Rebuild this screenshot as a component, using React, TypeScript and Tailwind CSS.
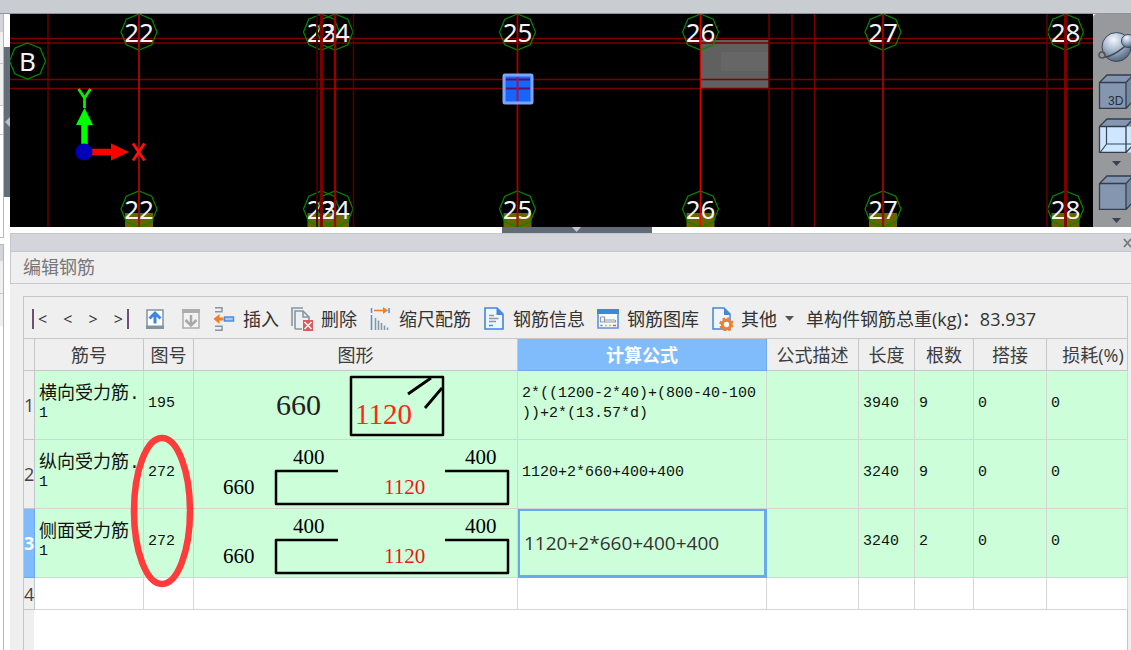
import React from 'react';

const UI_FONT = "font-['Open_Sans','Noto_Sans_CJK_SC',sans-serif]";
const MONO_FONT = "font-['Liberation_Mono','Noto_Sans_CJK_SC',monospace]";

type Line = { at: number; color: string; width: number };

const verticals: Line[] = [
  { at: 48, color: '#6c0000', width: 1.4 },
  { at: 139, color: '#a80808', width: 2 },
  { at: 317, color: '#480000', width: 2 },
  { at: 321.5, color: '#860000', width: 3 },
  { at: 335, color: '#a80000', width: 2.4 },
  { at: 353.5, color: '#5c0000', width: 1.6 },
  { at: 517.5, color: '#b80000', width: 1.8 },
  { at: 700.5, color: '#f40000', width: 1.6 },
  { at: 769, color: '#6c0000', width: 1.8 },
  { at: 792, color: '#780000', width: 1.4 },
  { at: 814.5, color: '#7c0000', width: 1.4 },
  { at: 883, color: '#980808', width: 2.2 },
  { at: 1047, color: '#540000', width: 2 },
  { at: 1065.5, color: '#880000', width: 3 },
];

const horizontals = [38.5, 43, 79.5, 88.5];

const axes = [
  { x: 139, label: '22' },
  { x: 321.5, label: '23' },
  { x: 335, label: '24' },
  { x: 517.5, label: '25' },
  { x: 700.5, label: '26' },
  { x: 883, label: '27' },
  { x: 1065.5, label: '28' },
];

function octagon(cx: number, cy: number) {
  return Array.from({ length: 8 }, (_, i) => {
    const a = (i * Math.PI) / 4;
    return `${cx + 18 * Math.sin(a)},${cy - 18 * Math.cos(a)}`;
  }).join(' ');
}

function AxisBubble({ x, y, label }: { x: number; y: number; label: string }) {
  return (
    <g>
      <text x={x} y={y + 10} textAnchor="middle" fill="#f2f2f2" className="font-['Noto_Sans',sans-serif] text-[26px]">
        {label}
      </text>
      <polygon points={octagon(x, y)} fill="none" stroke="#008a00" strokeWidth="1.2" />
    </g>
  );
}

function Drawing() {
  return (
    <svg viewBox="10 14 1083 213" preserveAspectRatio="xMinYMin slice" className="block h-[213px] min-w-0 flex-1 bg-black" role="img" aria-label="轴网">
      <rect x="701" y="40" width="68" height="48" fill="#606060" />
      <path d="M721 52h47v19h-47z" fill="#666" />
      {axes.map((a) => (
        <rect key={a.label} x={a.x - 14} y="213" width="28" height="14" fill="#686400" />
      ))}
      {horizontals.map((y) => (
        <line key={y} x1="10" x2="1093" y1={y} y2={y} stroke="#7c0000" strokeWidth="1.5" />
      ))}
      {axes.map((a) => (
        <React.Fragment key={a.label}>
          <AxisBubble x={a.x} y={32} label={a.label} />
          <AxisBubble x={a.x} y={209} label={a.label} />
        </React.Fragment>
      ))}
      <AxisBubble x={27.5} y={61} label="B" />
      {verticals.map((l) => (
        <line
          key={l.at}
          x1={l.at}
          x2={l.at}
          y1="14"
          y2={227}
          stroke={l.color}
          strokeWidth={l.width}
          strokeOpacity={l.width >= 1.6 ? 0.9 : 1}
        />
      ))}
      <rect x="504" y="75" width="28" height="28" rx="1" fill="#1466ff" stroke="#7ca6fb" strokeWidth="3" />
      <path d="M506 79.5h24M506 88.5h24" stroke="#5c1060" strokeWidth="2" />
      <path d="M517.500 77v24" stroke="#a01450" strokeWidth="2" />
      <path d="M84.500 146V124" stroke="#00ff00" strokeWidth="6.500" />
      <path d="M84.500 108l8.500 17h-17z" fill="#00ff00" />
      <path d="M78.500 89l6 9 6-9M84.500 98v10" fill="none" stroke="#00f000" strokeWidth="2.800" />
      <path d="M90 152h22" stroke="#ff0000" strokeWidth="6.500" />
      <path d="M129 152l-18-8.500v17z" fill="#ff0000" />
      <path d="M133 143.500l11.500 17M144.500 143.500l-11.500 17" stroke="#ff1010" strokeWidth="2.800" />
      <circle cx="84" cy="152" r="8.500" fill="#0000b8" />
    </svg>
  );
}

function Cube({ kind }: { kind: 'labelled' | 'open' | 'solid' }) {
  const open = kind === 'open';
  return (
    <svg width="36" height="36" viewBox="0 0 36 36" className="block shrink-0">
      <path d="M1.500 9.500L9 2h26l-7 7.500v26H1.500z" fill="#8496b0" />
      <path d="M28 9.500L35 2v26l-7 7.500z" fill="#7488a2" />
      {open && <path d="M1.500 9.500H34v26H1.500z" fill="#cfe6ff" />}
      {open && <path d="M8.500 10v17H34M8.500 27l-6 8" fill="none" stroke="#3a4658" strokeWidth="1.200" />}
      <path d="M1.500 9.500L9 2h26l-7 7.500v26H1.500zM1.500 9.500H28M35 2v26l-7 7.500" fill="none" stroke="#333d4c" strokeWidth="1.300" />
      {kind === 'labelled' && (
        <text x="10" y="32" fill="#26303c" className="font-['Liberation_Sans',sans-serif] text-[12px]">
          3D
        </text>
      )}
    </svg>
  );
}

function Caret({ className = '' }: { className?: string }) {
  return (
    <svg width="9" height="5" viewBox="0 0 9 5" className={`block shrink-0 ${className}`}>
      <path d="M0 0h9L4.500 5z" fill="currentColor" />
    </svg>
  );
}

function ViewTools() {
  return (
    <aside className="flex h-[213px] w-[38px] shrink-0 flex-col items-start overflow-hidden rounded-tl bg-[#98999d] pl-[5px] pt-[15px] text-[#384252]">
      <button aria-label="动态观察" className="mb-2">
        <svg width="36" height="36" viewBox="0 0 36 36" className="block">
          <defs>
            <radialGradient id="ball" cx="0.4" cy="0.25" r="0.75">
              <stop offset="0" stopColor="#f4f8ff" />
              <stop offset="0.5" stopColor="#a8b8cc" />
              <stop offset="1" stopColor="#53647c" />
            </radialGradient>
          </defs>
          <circle cx="18.500" cy="18" r="14.500" fill="url(#ball)" stroke="#3c4858" strokeWidth="1" />
          <path d="M6 28C14 28 26 19 30 14" fill="none" stroke="#3c4858" strokeWidth="1.500" />
          <circle cx="4" cy="26" r="3" fill="none" stroke="#50565e" strokeWidth="1.500" />
          <circle cx="30" cy="12" r="6.500" fill="url(#ball)" stroke="#3c4858" />
        </svg>
      </button>
      <button aria-label="三维" className="mb-2"><Cube kind="labelled" /></button>
      <button aria-label="线框" className="mb-2 flex flex-col items-center gap-2"><Cube kind="open" /><Caret /></button>
      <button aria-label="实体" className="flex flex-col items-center gap-2"><Cube kind="solid" /><Caret /></button>
    </aside>
  );
}

function MoveIcon({ down = false }: { down?: boolean }) {
  return down ? (
    <svg width="20" height="22" viewBox="0 0 20 22">
      <path d="M2 2h16v18H2z" fill="#f2f2f2" stroke="#adadad" strokeWidth="1.500" />
      <path d="M1 1h18v4H1z" fill="#adadad" />
      <path d="M10 7v10M4.500 12l5.500 5.500L15.500 12" fill="none" stroke="#a8a8a8" strokeWidth="2.500" />
    </svg>
  ) : (
    <svg width="20" height="22" viewBox="0 0 20 22">
      <path d="M2 2h16v18H2z" fill="#fff" stroke="#8393a0" strokeWidth="1.500" />
      <path d="M1 17.500h18V21H1z" fill="#8393a0" />
      <path d="M10 15.500V6M4.500 10.500L10 5l5.500 5.500" fill="none" stroke="#3f86dc" strokeWidth="3" />
    </svg>
  );
}

const toolIcons = {
  insert: (
    <>
      <path d="M2 .8h7v4H2M2 23.200h7v-4H2" fill="none" stroke="#8496a2" strokeWidth="1.500" />
      <path d="M2.500 12h8" stroke="#f57e20" strokeWidth="3" />
      <path d="M.5 12l6-5v10z" fill="#f57e20" />
      <path d="M11.500 10h9v4h-9z" fill="#a8c8f0" stroke="#4c8fe0" strokeWidth="1.500" />
    </>
  ),
  remove: (
    <>
      <path d="M1 19V1h11M4 22V4h8l6 6v4M4 22h7" fill="none" stroke="#8496a2" strokeWidth="1.600" />
      <path d="M12 4v6h6" fill="none" stroke="#8496a2" strokeWidth="1.500" />
      <path d="M12 13h10v11H12z" fill="#d95b60" />
      <path d="M13.500 15l7 7M20.500 15l-7 7" stroke="#fff" strokeWidth="1.400" />
    </>
  ),
  scale: (
    <>
      <path d="M2.500 1v5M20 1v5M2.500 8v15" stroke="#4c8fe0" strokeWidth="1.500" />
      <path d="M5 3.500h11" stroke="#f57e20" strokeWidth="1.600" />
      <path d="M14 0l5 3.500L14 7z" fill="#f57e20" />
      <path d="M6.500 11v12M9.500 13.500V23M12.500 16v7M15.500 18.500V23M18.500 20.500V23" stroke="#8496a2" strokeWidth="1.500" />
    </>
  ),
  info: (
    <>
      <path d="M2 1h12l6 6v15H2z" fill="#eef5fd" stroke="#4385d8" strokeWidth="1.600" />
      <path d="M13.500 1v7H20z" fill="#4385d8" />
      <path d="M6 8.500h5M6 11.500h9.500M6 14.500h7" stroke="#8b98a4" strokeWidth="1.400" />
      <path d="M6 18.500h4" stroke="#4385d8" strokeWidth="1.400" />
    </>
  ),
  gallery: (
    <>
      <path d="M1 3h20v18H1z" fill="#f8f9fa" stroke="#5b93da" strokeWidth="1.600" />
      <path d="M0 2h22v5H0z" fill="#4385d8" />
      <path d="M3.500 10h4v5M3.500 10v5h15v-2M7 13h11" fill="none" stroke="#919ba4" strokeWidth="1.200" />
      <path d="M3.500 18.500h2" stroke="#4385d8" strokeWidth="1.500" />
      <path d="M8 18.500h2M12 18.500h2" stroke="#efb348" strokeWidth="1.500" />
      <path d="M16 18.500h3" stroke="#e05555" strokeWidth="1.500" />
    </>
  ),
  other: (
    <>
      <path d="M2 1h11l6 6v15H2z" fill="#eef5fd" stroke="#4385d8" strokeWidth="1.500" />
      <path d="M13 1v7h6z" fill="#4385d8" />
      <circle cx="15.500" cy="17.500" r="4.200" fill="#fff" stroke="#f08030" strokeWidth="3" />
      <circle cx="15.500" cy="17.500" r="6" fill="none" stroke="#f08030" strokeWidth="2.500" strokeDasharray="2.700 2.010" />
    </>
  ),
};

function Tool({ icon, label, menu = false }: { icon: keyof typeof toolIcons; label: string; menu?: boolean }) {
  return (
    <button className="flex shrink-0 items-center gap-2">
      <svg width="22" height="24" viewBox="0 0 22 24" className="block">
        {toolIcons[icon]}
      </svg>
      <span>{label}</span>
      {menu && <Caret className="text-[#555]" />}
    </button>
  );
}

const digits = "font-['Liberation_Serif',serif]";

function StirrupShape() {
  return (
    <svg width="322" height="68" viewBox="194 371 322 68" className="block">
      <path d="M351 377h92v58h-92z" fill="none" stroke="#000" strokeWidth="2.500" strokeLinejoin="round" />
      <path d="M431 378l-23 16M442 388l-17 20" stroke="#000" strokeWidth="2.800" />
      <text x="276" y="415" fill="#222" className={`${digits} text-[30px]`}>660</text>
      <text x="355" y="424" fill="#ff2814" className={`${digits} text-[29px]`}>1120</text>
    </svg>
  );
}

function HookShape() {
  return (
    <svg width="322" height="68" viewBox="194 440 322 68" className="block">
      <path d="M338 471h-62v33h232v-33h-63" fill="none" stroke="#000" strokeWidth="2.500" strokeLinejoin="round" />
      <g className={`${digits} text-[21px]`}>
        <text x="293" y="464">400</text>
        <text x="465" y="464">400</text>
        <text x="223" y="494">660</text>
        <text x="384" y="494" fill="#f01414">1120</text>
      </g>
    </svg>
  );
}

const headers = ['筋号', '图号', '图形', '计算公式', '公式描述', '长度', '根数', '搭接', '损耗(%)'];

const rows = [
  { name: '横向受力筋.', code: '195', formula: '2*((1200-2*40)+(800-40-100))+2*(13.57*d)', length: '3940', count: '9' },
  { name: '纵向受力筋.', code: '272', formula: '1120+2*660+400+400', length: '3240', count: '9' },
  { name: '侧面受力筋.', code: '272', formula: '1120+2*660+400+400', length: '3240', count: '2', selected: true },
];

function RebarTable() {
  const cell = 'border-b border-r border-[#d4d6d4] px-1 pb-0.5 text-left';
  const head = 'overflow-hidden whitespace-nowrap border-b border-r border-[#c4c6c8] p-0 text-center font-normal';
  return (
    <table className="w-full table-fixed border-separate border-spacing-0 text-[#111]">
      <colgroup>
        <col className="w-[11px]" />
        <col className="w-[109px]" />
        <col className="w-[50px]" />
        <col />
        <col className="w-[249px]" />
        <col className="w-[92px]" />
        <col className="w-[56px]" />
        <col className="w-[59px]" />
        <col className="w-[73px]" />
        <col className="w-[81px]" />
      </colgroup>
      <thead>
        <tr className="h-8 bg-[#efefef] text-lg leading-6 text-[#3c3c3c]">
          <th className={head} aria-label="行" />
          {headers.map((h) => (
            <th
              key={h}
              className={
                h === '计算公式'
                  ? 'border-b border-r border-[#6ea8ee] bg-[#80bbfb] p-0 text-center font-bold text-white'
                  : h === '损耗(%)'
                    ? `${head} pl-3`
                    : head
              }
            >
              {h}
            </th>
          ))}
        </tr>
      </thead>
      <tbody className={`${MONO_FONT} text-[15px] leading-5`}>
        {rows.map((r, i) => (
          <tr key={r.name} className="h-[69px] bg-[#ccffd9]">
            <th
              className={
                r.selected
                  ? `${UI_FONT} border-b border-r border-[#6ea8ee] bg-[#80bbfb] p-0 text-lg font-bold text-white`
                  : `${UI_FONT} border-b border-r border-[#c4c6c8] bg-[#efefef] p-0 text-lg font-normal text-[#444]`
              }
            >
              {i + 1}
            </th>
            <td className={cell}>
              <span className="block whitespace-nowrap text-lg leading-5">{r.name}</span>
              <span className="block">1</span>
            </td>
            <td className={cell}>{r.code}</td>
            <td className="overflow-hidden border-b border-r border-[#d4d6d4] p-0">
              {i === 0 ? <StirrupShape /> : <HookShape />}
            </td>
            {r.selected ? (
              <td className="border-b border-r border-[#68a8ec] p-0">
                <input
                  aria-label="计算公式"
                  defaultValue={r.formula}
                  className={`${UI_FONT} block h-[68px] w-full border-2 border-[#68a8ec] bg-transparent px-1 text-[19px] text-[#333] outline-none`}
                />
              </td>
            ) : (
              <td className={`${cell} [line-break:anywhere]`}>{r.formula}</td>
            )}
            <td className={cell} />
            <td className={cell}>{r.length}</td>
            <td className={cell}>{r.count}</td>
            <td className={cell}>0</td>
            <td className={cell}>0</td>
          </tr>
        ))}
        <tr className="h-8 bg-white">
          <th className={`${UI_FONT} border-b border-r border-[#c4c6c8] bg-[#efefef] p-0 text-lg font-normal text-[#444]`}>4</th>
          {headers.map((h) => (
            <td key={h} className={cell} />
          ))}
        </tr>
      </tbody>
    </table>
  );
}

function LeftEdge() {
  return (
    <div className="flex w-[10px] shrink-0">
      <div className="flex w-1 flex-col">
        <div className="flex h-[224px] flex-col border-b border-r border-[#b4b6bc] bg-white">
          <div className="h-[18px] bg-[#d3d5db]" />
          <div className="h-8 border-b border-[#c4c6ca] bg-[#efefef]" />
          <div className="h-[42px] border-b border-[#c4c6ca] bg-[#efefef]" />
          <div className="h-[29px] border-b border-[#c4c6ca]" />
        </div>
        <div className="mt-[6px] flex flex-1 flex-col border-r border-t border-[#b4b6bc] bg-white">
          <div className="h-4 bg-[#d3d5db]" />
          <div className="h-[33px] border-b border-[#c4c6ca] bg-[#efefef]" />
          <div className="h-8 bg-[#efefef]" />
        </div>
      </div>
      <button aria-label="折叠左侧面板" className="mt-[33px] flex h-[150px] w-[6px] items-center justify-end bg-[#626e79]">
        <svg width="5" height="10" viewBox="0 0 5 10"><path d="M5 0v10L0 5z" fill="#bcc0c4" /></svg>
      </button>
    </div>
  );
}

export default function App() {
  return (
    <div className={`${UI_FONT} flex min-h-screen flex-col overflow-x-hidden bg-white`}>
      <header className="h-[14px] border-b border-[#8f949c] bg-[#c9cdd1]" />
      <div className="flex flex-1">
        <LeftEdge />
        <main className="flex min-w-0 flex-1 flex-col">
          <section className="flex">
            <Drawing />
            <ViewTools />
          </section>
          <div className="flex h-[6px] justify-center pl-3">
            <button aria-label="折叠下方面板" className="flex w-[150px] justify-center bg-[#626c78] text-[#c4c8cc]">
              <Caret />
            </button>
          </div>
          <section className="flex flex-1 flex-col bg-[#efefef]">
            <div className="flex h-[18px] items-center justify-end border-l border-t border-[#c4c7cb] bg-[#d3d5db]">
              <button aria-label="关闭" className="text-[#777]">
                <svg width="8" height="10" viewBox="0 0 8 10" className="block"><path d="M1 1l7 8M8 1L1 9" stroke="currentColor" strokeWidth="1.800" /></svg>
              </button>
            </div>
            <h1 className="flex h-[33px] items-center border-b border-l border-t border-[#c4c7cb] pb-0.5 pl-3 text-lg leading-6 text-[#777]">编辑钢筋</h1>
            <div className="flex flex-1 flex-col pl-[13px] pr-[3px] pt-[12px]">
              <div className="relative flex flex-1 flex-col border-l border-t border-[#c4c6c8]">
                <div className="flex h-[42px] items-center gap-3 whitespace-nowrap border-b border-r border-[#c4c6c8] pl-2 pt-0.5 text-lg leading-6 text-[#333]">
                  <div className="flex w-[169px] shrink-0 items-center justify-between text-base">
                    <button aria-label="首行" className="flex items-center"><span className="h-5 w-[2px] bg-[#705070]" /><span className="pl-1">&lt;</span></button>
                    <button aria-label="上一行">&lt;</button>
                    <button aria-label="下一行">&gt;</button>
                    <button aria-label="末行" className="flex items-center"><span className="pr-1">&gt;</span><span className="h-5 w-[2px] bg-[#705070]" /></button>
                    <button aria-label="上移"><MoveIcon /></button>
                    <button aria-label="下移"><MoveIcon down /></button>
                  </div>
                  <Tool icon="insert" label="插入" />
                  <Tool icon="remove" label="删除" />
                  <Tool icon="scale" label="缩尺配筋" />
                  <Tool icon="info" label="钢筋信息" />
                  <Tool icon="gallery" label="钢筋图库" />
                  <Tool icon="other" label="其他" menu />
                  <span>单构件钢筋总重(kg)：83.937</span>
                </div>
                <RebarTable />
                <div className="flex flex-1">
                  <div className="w-[10px] bg-[#efefef]" />
                  <div className="flex-1 border-r border-[#c4c6c8] bg-white" />
                </div>
                <svg width="64" height="156" viewBox="0 0 64 156" className="pointer-events-none absolute left-[106px] top-[136px]">
                  <ellipse cx="32" cy="78" rx="28" ry="73" fill="none" stroke="#ff3b3b" strokeWidth="6.500" />
                </svg>
              </div>
            </div>
          </section>
        </main>
      </div>
    </div>
  );
}
